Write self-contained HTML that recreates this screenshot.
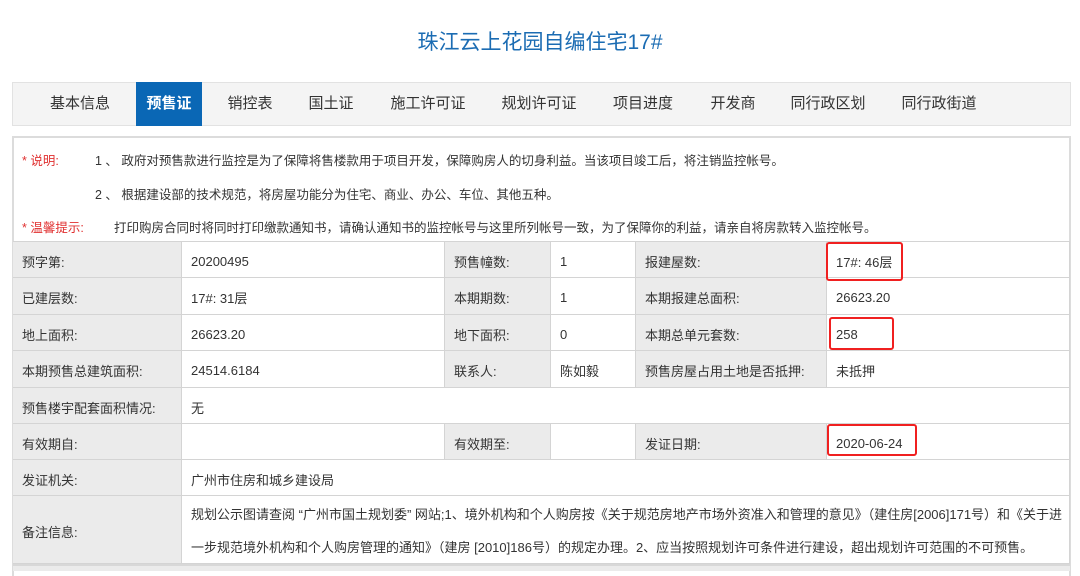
<!DOCTYPE html><html><head><meta charset="utf-8"><style>
*{margin:0;padding:0;box-sizing:border-box}
body{width:1080px;height:571px;background:#fff;font-family:"Liberation Sans","Noto Sans CJK SC",sans-serif;color:#333;position:relative;overflow:hidden}
.a{position:absolute;white-space:nowrap}
.title{left:0;width:1080px;top:26px;text-align:center;font-size:21px;color:#1b6cb3}
.nav{left:12px;top:82px;width:1059px;height:44px;background:#f4f4f4;border:1px solid #e2e2e2}
.n{top:82px;height:44px;line-height:44px;font-size:15px;color:#333;transform:translateX(-50%)}
.act{left:136px;top:82px;width:66px;height:44px;background:#0a67b5}
.box{left:12px;top:136px;width:1059px;height:440px;border:2px solid #dcdcdc;border-bottom:none}
.note{font-size:12.5px;color:#333}
.red{color:#e03030}
.c{position:absolute;border-right:1px solid #d4d4d4;border-bottom:1px solid #d4d4d4;font-size:13px;padding-left:9px;padding-top:3px;display:flex;align-items:center}
.l{background:#ebebeb}
.rb{position:absolute;border:2.5px solid #f02020;border-radius:3px}
</style></head><body>
<div class="a title">珠江云上花园自编住宅17#</div>
<div class="a nav"></div>
<div class="a act"></div>
<div class="a n" style="left:80px">基本信息</div>
<div class="a n" style="left:169px;color:#fff;font-weight:bold">预售证</div>
<div class="a n" style="left:250px">销控表</div>
<div class="a n" style="left:331px">国土证</div>
<div class="a n" style="left:428px">施工许可证</div>
<div class="a n" style="left:539px">规划许可证</div>
<div class="a n" style="left:643px">项目进度</div>
<div class="a n" style="left:733px">开发商</div>
<div class="a n" style="left:828px">同行政区划</div>
<div class="a n" style="left:939px">同行政街道</div>
<div class="a box"></div>
<div class="a note" style="left:22px;top:150px"><span class="red">* 说明:</span></div>
<div class="a note" style="left:95px;top:150px">1 、 政府对预售款进行监控是为了保障将售楼款用于项目开发，保障购房人的切身利益。当该项目竣工后，将注销监控帐号。</div>
<div class="a note" style="left:95px;top:184px">2 、 根据建设部的技术规范，将房屋功能分为住宅、商业、办公、车位、其他五种。</div>
<div class="a note" style="left:22px;top:217px"><span class="red">* 温馨提示:</span></div>
<div class="a note" style="left:114px;top:217px">打印购房合同时将同时打印缴款通知书，请确认通知书的监控帐号与这里所列帐号一致，为了保障你的利益，请亲自将房款转入监控帐号。</div>
<div class="a" style="left:13px;top:241px;width:1057px;border-top:1px solid #d4d4d4"></div>
<div style="position:absolute;left:13px;top:0">
<div class="c l" style="left:0;top:242px;width:169px;height:36px">预字第:</div>
<div class="c" style="left:169px;top:242px;width:263px;height:36px">20200495</div>
<div class="c l" style="left:432px;top:242px;width:106px;height:36px">预售幢数:</div>
<div class="c" style="left:538px;top:242px;width:85px;height:36px">1</div>
<div class="c l" style="left:623px;top:242px;width:191px;height:36px">报建屋数:</div>
<div class="c" style="left:814px;top:242px;width:243px;height:36px">17#: 46层</div>
<div class="c l" style="left:0;top:278px;width:169px;height:37px">已建层数:</div>
<div class="c" style="left:169px;top:278px;width:263px;height:37px">17#: 31层</div>
<div class="c l" style="left:432px;top:278px;width:106px;height:37px">本期期数:</div>
<div class="c" style="left:538px;top:278px;width:85px;height:37px">1</div>
<div class="c l" style="left:623px;top:278px;width:191px;height:37px">本期报建总面积:</div>
<div class="c" style="left:814px;top:278px;width:243px;height:37px">26623.20</div>
<div class="c l" style="left:0;top:315px;width:169px;height:36px">地上面积:</div>
<div class="c" style="left:169px;top:315px;width:263px;height:36px">26623.20</div>
<div class="c l" style="left:432px;top:315px;width:106px;height:36px">地下面积:</div>
<div class="c" style="left:538px;top:315px;width:85px;height:36px">0</div>
<div class="c l" style="left:623px;top:315px;width:191px;height:36px">本期总单元套数:</div>
<div class="c" style="left:814px;top:315px;width:243px;height:36px">258</div>
<div class="c l" style="left:0;top:351px;width:169px;height:37px">本期预售总建筑面积:</div>
<div class="c" style="left:169px;top:351px;width:263px;height:37px">24514.6184</div>
<div class="c l" style="left:432px;top:351px;width:106px;height:37px">联系人:</div>
<div class="c" style="left:538px;top:351px;width:85px;height:37px">陈如毅</div>
<div class="c l" style="left:623px;top:351px;width:191px;height:37px">预售房屋占用土地是否抵押:</div>
<div class="c" style="left:814px;top:351px;width:243px;height:37px">未抵押</div>
<div class="c l" style="left:0;top:388px;width:169px;height:36px">预售楼宇配套面积情况:</div>
<div class="c" style="left:169px;top:388px;width:888px;height:36px">无</div>
<div class="c l" style="left:0;top:424px;width:169px;height:36px">有效期自:</div>
<div class="c" style="left:169px;top:424px;width:263px;height:36px"></div>
<div class="c l" style="left:432px;top:424px;width:106px;height:36px">有效期至:</div>
<div class="c" style="left:538px;top:424px;width:85px;height:36px"></div>
<div class="c l" style="left:623px;top:424px;width:191px;height:36px">发证日期:</div>
<div class="c" style="left:814px;top:424px;width:243px;height:36px">2020-06-24</div>
<div class="c l" style="left:0;top:460px;width:169px;height:36px">发证机关:</div>
<div class="c" style="left:169px;top:460px;width:888px;height:36px">广州市住房和城乡建设局</div>
<div class="c l" style="left:0;top:496px;width:169px;height:68px">备注信息:</div>
<div class="c" style="left:169px;top:496px;width:888px;height:68px;line-height:33px;white-space:normal;font-size:13px;padding-right:4px">规划公示图请查阅 “广州市国土规划委” 网站;1、境外机构和个人购房按《关于规范房地产市场外资准入和管理的意见》（建住房[2006]171号）和《关于进一步规范境外机构和个人购房管理的通知》（建房 [2010]186号）的规定办理。2、应当按照规划许可条件进行建设，超出规划许可范围的不可预售。</div>
</div>
<div class="a" style="left:13px;top:564px;width:1057px;height:7px;background:#ebebeb;border-top:2px solid #d8d8d8"></div>
<div class="rb" style="left:826px;top:242px;width:77px;height:39px"></div>
<div class="rb" style="left:829px;top:317px;width:65px;height:33px"></div>
<div class="rb" style="left:827px;top:424px;width:90px;height:32px"></div>
</body></html>
